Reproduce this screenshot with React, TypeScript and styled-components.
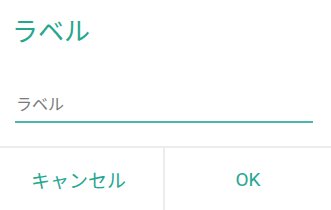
import React from 'react';
import styled, { createGlobalStyle } from 'styled-components';

const GlobalStyle = createGlobalStyle`
  html, body {
    margin: 0;
    padding: 0;
    background: #ffffff;
  }
  body {
    font-family: 'Roboto', 'Noto Sans CJK JP', sans-serif;
  }
`;

const Dialog = styled.div`
  width: 331px;
  height: 210px;
  display: flex;
  flex-direction: column;
  background: #ffffff;
`;

const Body = styled.div`
  flex: 1;
  display: flex;
  flex-direction: column;
  padding: 13px 18px 0 12px;
`;

const Title = styled.h1`
  margin: 0;
  font-family: 'Noto Sans CJK JP', sans-serif;
  font-weight: 400;
  font-size: 26px;
  line-height: 33px;
  color: #26a68f;
`;

const Field = styled.div`
  margin-top: 47px;
  margin-left: 3px;
  border-bottom: 2px solid #4db6ac;
  padding-bottom: 8px;
`;

const Input = styled.input`
  display: block;
  width: 100%;
  border: none;
  outline: none;
  padding: 0 0 0 1px;
  font-family: 'Noto Sans CJK JP', sans-serif;
  font-size: 16px;
  line-height: 20px;
  color: #7a7a7a;
  background: transparent;

  &::placeholder {
    color: #7a7a7a;
  }
`;

const Actions = styled.div`
  height: 62px;
  display: flex;
  border-top: 2px solid #ececec;
`;

const ActionButton = styled.button<{ divider?: boolean }>`
  flex: ${p => (p.divider ? '0 0 165px' : '1')};
  border: none;
  background: transparent;
  border-right: ${p => (p.divider ? '2px solid #ececec' : 'none')};
  font-family: 'Roboto', 'Noto Sans CJK JP', sans-serif;
  font-size: 19px;
  color: #26a68f;
  padding: ${p => (p.divider ? '0 6px 0 0' : '0')};
  cursor: pointer;
`;

const App: React.FC = () => (
  <>
    <GlobalStyle />
    <Dialog>
      <Body>
        <Title>ラベル</Title>
        <Field>
          <Input placeholder="ラベル" />
        </Field>
      </Body>
      <Actions>
        <ActionButton divider>キャンセル</ActionButton>
        <ActionButton>OK</ActionButton>
      </Actions>
    </Dialog>
  </>
);

export default App;
